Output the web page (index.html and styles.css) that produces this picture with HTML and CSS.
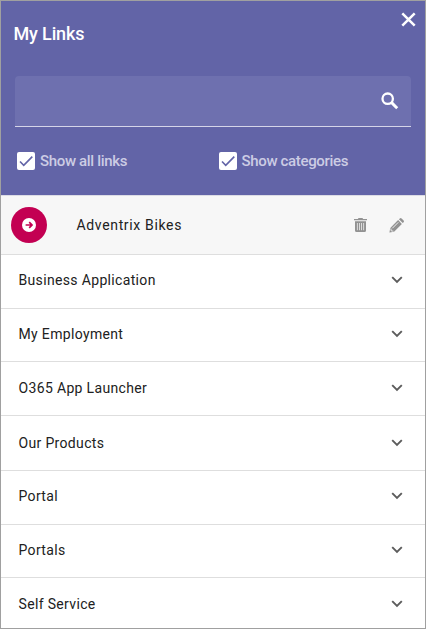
FILE: index.html
```html
<!DOCTYPE html>
<html lang="en">
<head>
<meta charset="utf-8">
<title>My Links</title>
<link rel="stylesheet" href="styles.css">
</head>
<body>
<svg class="defs" width="0" height="0">
  <symbol id="chevron" viewBox="0 0 12 8"><path d="M1.2 1.2 6 6l4.800-4.800" fill="none" stroke="currentColor" stroke-width="1.900"/></symbol>
  <symbol id="tick" viewBox="0 0 24 24"><path d="M1.730 12.910 8.100 19.280 22.790 4.590" fill="none" stroke="currentColor" stroke-width="2.800"/></symbol>
</svg>
<main class="panel">
  <header class="header">
    <div class="top">
      <h1 class="title">My Links</h1>
      <button class="close" aria-label="Close"><svg width="15" height="15" viewBox="0 0 15 15"><path d="M1.300 1.300 13.700 13.700M13.700 1.300 1.300 13.700" stroke="currentColor" stroke-width="2.500"/></svg></button>
    </div>
    <div class="search">
      <input class="field" type="text" aria-label="Search">
      <svg class="lens" width="24" height="24" viewBox="0 0 24 24"><g fill="none" stroke="currentColor"><circle cx="9.700" cy="9.700" r="5.200" stroke-width="2.300"/><path d="m13.600 13.600 5.600 5.600" stroke-width="2.900"/></g></svg>
    </div>
    <div class="options">
      <label class="option"><span class="box"><svg width="14" height="14"><use href="#tick"/></svg></span>Show all links</label>
      <label class="option"><span class="box"><svg width="14" height="14"><use href="#tick"/></svg></span>Show categories</label>
    </div>
  </header>
  <section class="link">
    <span class="avatar"><svg width="14" height="14" viewBox="0 0 14 14"><circle cx="7" cy="7" r="7" fill="#fff"/><path d="M3.600 7h6M7.200 4.200 10 7l-2.800 2.800" fill="none" stroke="#c30052" stroke-width="1.700"/></svg></span>
    <span class="name">Adventrix Bikes</span>
    <svg class="trash" width="13" height="14" viewBox="0 0 13 14"><path fill="#929292" d="M0 1h3.800l.8-1h3.800l.8 1H13v1.300H0zM1 3.200h11V12.500Q12 14 10.500 14h-8Q1 14 1 12.500z"/><path d="M3.400 5v7.200M5.500 5v7.200M7.500 5v7.200M9.600 5v7.200" stroke="#e4e4e4" stroke-width=".9"/></svg>
    <svg class="pencil" width="15" height="15" viewBox="0 0 15 15"><g fill="#929292"><path d="m1.300 9.900 7.800-7.800 3.800 3.800-7.800 7.800L.4 14.600z"/><path d="m9.900 1.300.9-.9q.9-.8 1.800 0l2 2q.8.900 0 1.800l-.9.900z"/></g><path d="m3.300 10.300 6-6M1.900 10.700l.3 2.200 2.200.3" fill="none" stroke="#eee" stroke-width="1"/></svg>
  </section>
  <ul class="categories">
    <li class="category raised"><span>Business Application</span><svg class="chevron"><use href="#chevron"/></svg></li>
    <li class="category"><span>My Employment</span><svg class="chevron"><use href="#chevron"/></svg></li>
    <li class="category"><span>O365 App Launcher</span><svg class="chevron"><use href="#chevron"/></svg></li>
    <li class="category lowered"><span>Our Products</span><svg class="chevron"><use href="#chevron"/></svg></li>
    <li class="category raised"><span>Portal</span><svg class="chevron"><use href="#chevron"/></svg></li>
    <li class="category"><span>Portals</span><svg class="chevron"><use href="#chevron"/></svg></li>
    <li class="category"><span>Self Service</span><svg class="chevron"><use href="#chevron"/></svg></li>
  </ul>
</main>
</body>
</html>
```
FILE: styles.css
```css
* { box-sizing: border-box; }
body { margin: 0; font-family: Roboto, "Liberation Sans", sans-serif; }
svg { display: block; flex: none; }
.defs { position: absolute; }
.panel {
  width: 426px;
  height: 629px;
  border: 1px solid #a0a0a0;
  background: #fff;
  overflow: hidden;
}
.header {
  height: 194px;
  padding: 0 14px;
  background: #6264a7;
  color: #fff;
}
.top { display: flex; justify-content: space-between; height: 75px; }
.title { margin: 21px 0 0 -1.500px; font-size: 18px; line-height: 24px; font-weight: 500; letter-spacing: -.15px; }
.close { align-self: flex-start; margin: 11px -5px 0 0; padding: 0; border: 0; background: none; color: #fff; }
.search {
  display: flex;
  align-items: center;
  height: 51px;
  padding-right: 9px;
  border-bottom: 1px solid #d5d5e8;
  border-radius: 4px 4px 0 0;
  background: #6e70af;
}
.field { flex: 1; min-width: 0; height: 50px; border: 0; outline: 0; background: none; color: #fff; }
.options {
  display: grid;
  grid-template-columns: 201.500px 1fr;
  margin-top: 24px;
  padding-left: 2px;
}
.option {
  display: flex;
  align-items: center;
  gap: 5px;
  height: 20px;
  font-size: 15px;
  font-weight: 500;
  letter-spacing: -.34px;
  color: #cccce4;
}
.box {
  display: grid;
  place-items: center;
  width: 18px;
  height: 18px;
  border-radius: 2px;
  background: #fff;
  color: #6264a7;
}
.link {
  display: flex;
  align-items: center;
  height: 60px;
  padding: 0 21px 0 10px;
  border-top: 1px solid #dcdce5;
  border-bottom: 1px solid #dedede;
  background: #f7f7f7;
}
.avatar {
  display: grid;
  place-items: center;
  width: 36px;
  height: 36px;
  border-radius: 50%;
  background: #c30052;
}
.name { flex: 1; margin-left: 29.500px; font-size: 14px; letter-spacing: .65px; color: #212121; }
.pencil { margin-left: 22px; }
.categories {
  display: grid;
  grid-template-rows: 54px 53px 54px 55px 54px 53px 54px;
  margin: 0;
  padding: 0;
  list-style: none;
}
.category {
  display: flex;
  align-items: center;
  justify-content: space-between;
  padding: 0 22px 2px 17.500px;
  border-bottom: 1px solid #dedede;
  font-size: 14px;
  letter-spacing: .34px;
  color: #212121;
}
.category.raised { padding-bottom: 4px; }
.category.lowered { padding-bottom: 0; }
.chevron { width: 12px; height: 8px; color: #5c5c5c; }
```
